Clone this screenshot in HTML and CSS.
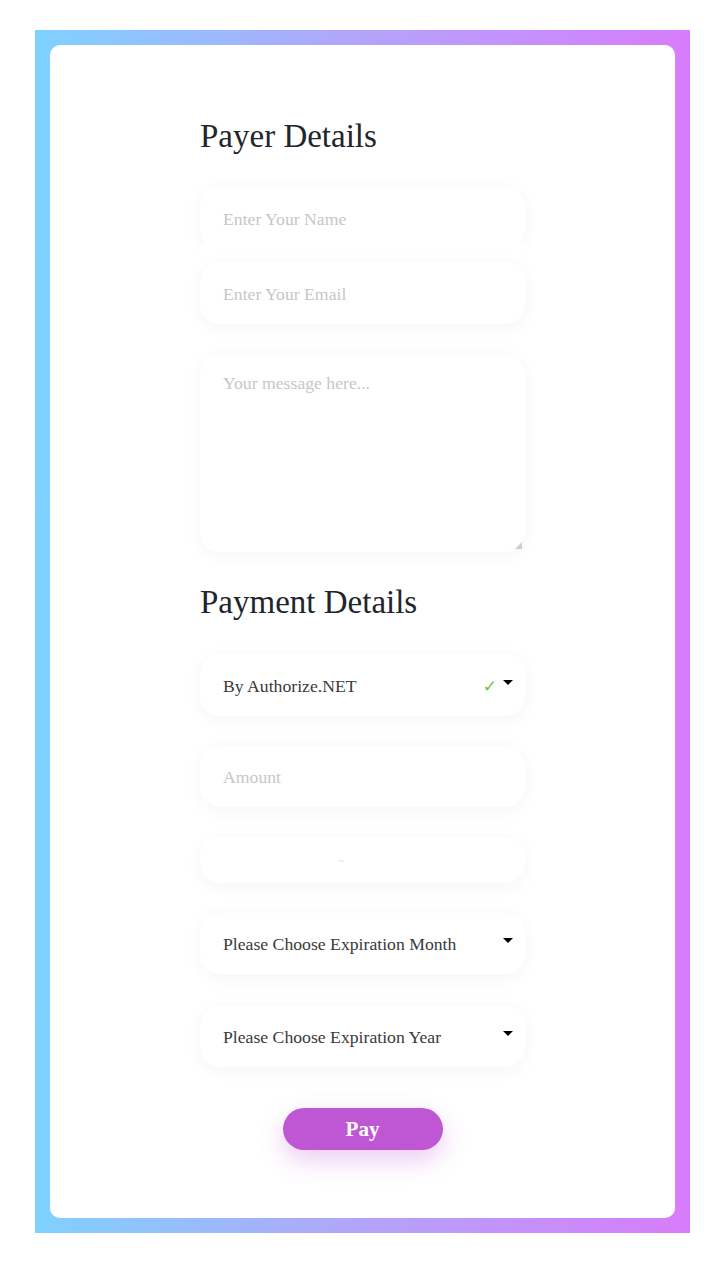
FILE: index.html
```html
<!DOCTYPE html>
<html>
<head>
<meta charset="utf-8">
<link rel="stylesheet" href="styles.css">
</head>
<body>
<div class="frame">
  <div class="card">
    <form class="form">
      <h1 class="title">Payer Details</h1>
      <div class="field field-name"><span class="ph">Enter Your Name</span></div>
      <div class="cover">
        <div class="field"><span class="ph">Enter Your Email</span></div>
      </div>
      <div class="field textarea"><span class="ph">Your message here...</span><span class="grip"></span></div>
      <h2 class="title title2">Payment Details</h2>
      <div class="field select"><span class="val">By Authorize.NET</span><span class="check">✓</span><span class="caret"></span></div>
      <div class="field amount"><span class="ph">Amount</span></div>
      <div class="field cardel"><span class="tiny">~</span></div>
      <div class="field select month"><span class="val">Please Choose Expiration Month</span><span class="caret"></span></div>
      <div class="field select year"><span class="val">Please Choose Expiration Year</span><span class="caret"></span></div>
      <div class="actions"><button type="button" class="pay">Pay</button></div>
    </form>
  </div>
</div>
</body>
</html>
```
FILE: styles.css
```css
html, body { margin: 0; padding: 0; background: #fff; }
body { font-family: "Liberation Serif", "DejaVu Serif", serif; }
.frame {
  margin: 30px 0 0 35px;
  width: 655px;
  height: 1203px;
  box-sizing: border-box;
  padding: 15px;
  background: linear-gradient(to right, #7fd2ff, #b3a4fb 50%, #d87cfb);
}
.card {
  background: #fff;
  border-radius: 10px;
  height: 100%;
  display: flex;
  justify-content: center;
}
.form { width: 325px; padding-top: 72px; display: flex; flex-direction: column; }
.title {
  margin: 0;
  font-weight: 400;
  font-size: 33px;
  line-height: 38px;
  color: #22252b;
  height: 38px;
}
.field {
  background: #fff;
  border-radius: 20px;
  box-shadow: 0 3px 18px rgba(0,0,0,0.045);
  height: 62px;
  box-sizing: border-box;
  padding: 2px 23px 0;
  display: flex;
  align-items: center;
  font-size: 17.7px;
}
.field-name { margin-top: 32px; }
.cover {
  position: relative;
  background: #fff;
  margin-top: -6px;
  padding-top: 19px;
}
.ph { color: #c9c6c6; }
.val { color: #3a3a3a; flex: 1; }
.textarea {
  margin-top: 31px;
  height: 197px;
  align-items: flex-start;
  padding-top: 18px;
  position: relative;
}
.grip {
  position: absolute;
  right: 3px;
  bottom: 3px;
  width: 7px;
  height: 7px;
  background:
    radial-gradient(circle, #999 0.6px, transparent 0.8px) 0 0 / 2px 2px;
  clip-path: polygon(100% 0, 100% 100%, 0 100%);
}
.title2 { margin-top: 31px; }
.select { margin-top: 33px; }
.check { color: #6cc24a; font-size: 17px; margin-right: 6px; font-family: "DejaVu Sans", sans-serif; }
.caret {
  width: 0; height: 0;
  border-left: 5px solid transparent;
  border-right: 5px solid transparent;
  border-top: 5px solid #000;
  margin-top: -8px;
  margin-right: -11px;
}
.month .caret, .year .caret { margin-left: 10px; }
.amount { margin-top: 30px; height: 61px; }
.cardel { margin-top: 30px; height: 46px; justify-content: center; }
.tiny { color: #ccc; font-size: 9px; margin-left: -42px; }
.month { margin-top: 30px; height: 61px; }
.year { margin-top: 32px; height: 61px; }
.actions { display: flex; justify-content: center; margin-top: 41px; }
.pay {
  width: 160px;
  height: 42px;
  border: 0;
  border-radius: 21px;
  background: #bf57d4;
  color: #fff;
  font-family: "Liberation Serif", "DejaVu Serif", serif;
  font-weight: 700;
  font-size: 21px;
  box-shadow: 0 10px 24px rgba(191,87,212,0.3);
  cursor: pointer;
}
```
